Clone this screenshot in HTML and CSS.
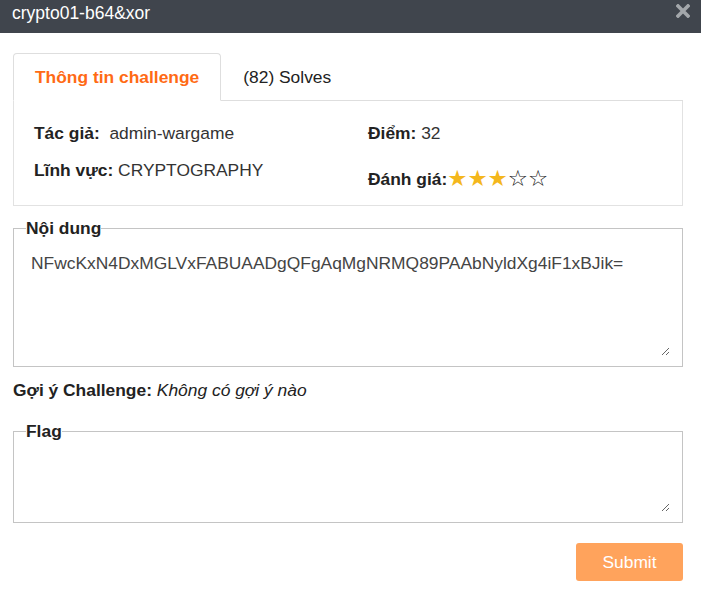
FILE: index.html
```html
<!DOCTYPE html>
<html lang="vi">
<head>
<meta charset="utf-8">
<title>crypto01-b64&amp;xor</title>
<link rel="stylesheet" href="styles.css">
</head>
<body>
<div class="modal">
  <header class="modal-header">
    <h1 class="modal-title">crypto01-b64&amp;xor</h1>
    <button class="close" aria-label="Close">
      <svg width="14" height="14" viewBox="0 0 14 14"><path d="M2 2 L12 12 M12 2 L2 12" stroke="#a3a7ab" stroke-width="3.6" stroke-linecap="square"/></svg>
    </button>
  </header>
  <div class="modal-body">
    <ul class="nav-tabs">
      <li class="tab active">Thông tin challenge</li>
      <li class="tab">(82) Solves</li>
    </ul>
    <div class="tab-panel">
      <div class="info-grid">
        <div class="cell"><b>Tác giả:</b>&nbsp; admin-wargame</div>
        <div class="cell"><b>Điểm:</b> 32</div>
        <div class="cell"><b>Lĩnh vực:</b> CRYPTOGRAPHY</div>
        <div class="cell cell-rating"><b>Đánh giá:</b><span class="stars"><span class="on">★★★</span><span class="off">☆☆</span></span></div>
      </div>
    </div>
    <fieldset class="box box-content">
      <legend>Nội dung</legend>
      <textarea class="area area-content" readonly>NFwcKxN4DxMGLVxFABUAADgQFgAqMgNRMQ89PAAbNyldXg4iF1xBJik=</textarea>
    </fieldset>
    <p class="hint"><b>Gợi ý Challenge:</b> <i>Không có gợi ý nào</i></p>
    <fieldset class="box box-flag">
      <legend>Flag</legend>
      <textarea class="area area-flag"></textarea>
    </fieldset>
    <div class="actions">
      <button class="submit">Submit</button>
    </div>
  </div>
</div>
</body>
</html>
```

FILE: styles.css
```css
* { box-sizing: border-box; }
html, body { margin: 0; padding: 0; background: #fff; }
body {
  font-family: "Liberation Sans", Arial, sans-serif;
  font-size: 17.4px;
  color: #333;
  width: 701px;
  height: 595px;
  overflow: hidden;
}
.modal-header {
  height: 33px;
  background: #40454d;
  display: flex;
  align-items: flex-start;
  justify-content: space-between;
  padding: 0 11px 0 12px;
}
.modal-title {
  margin: 0;
  font-size: 17.5px;
  font-weight: normal;
  line-height: 27px;
  color: #fff;
}
.close {
  border: 0;
  background: none;
  padding: 0;
  margin-top: 4px;
  width: 14px;
  height: 14px;
  display: block;
}
.close svg { display: block; }
.modal-body {
  padding: 20px 18px 0 13px;
}
.nav-tabs {
  list-style: none;
  margin: 0;
  padding: 0;
  display: flex;
  border-bottom: 1px solid #dedede;
}
.tab {
  margin-bottom: -1px;
  padding: 13px 21px;
  line-height: 20px;
  border: 1px solid transparent;
  border-radius: 4px 4px 0 0;
  color: #222;
}
.tab.active {
  color: #ff6a14;
  font-weight: bold;
  background: #fff;
  border-color: #dedede;
  border-bottom-color: #fff;
}
.tab-panel {
  border: 1px solid #e2e2e2;
  border-top: 0;
  padding: 22px 0 16px;
}
.info-grid {
  display: grid;
  grid-template-columns: 1fr 1fr;
  row-gap: 17px;
}
.cell {
  padding: 0 20px;
  line-height: 20px;
  color: #333;
}
.cell b { color: #222; }
.cell-rating { margin-top: 8px; }
.stars {
  font-family: "DejaVu Sans", sans-serif;
  font-size: 22.5px;
  line-height: 20px;
  letter-spacing: 0;
  vertical-align: -1px;
}
.stars .on { color: #f4b71c; }
.stars .off { color: #222; }
.box {
  margin: 12px 0 0;
  padding: 4px 12px 10px;
  border: 1px solid #c4c4c4;
  min-width: 0;
}
.box legend {
  padding: 0;
  font-weight: bold;
  line-height: 20px;
  color: #222;
}
.area {
  display: block;
  width: 100%;
  border: 0;
  outline: none;
  font-family: "Liberation Sans", Arial, sans-serif;
  font-size: 17.4px;
  line-height: 20px;
  color: #444;
  padding: 11px 5px;
  resize: vertical;
  background: #fff;
}
.area-content { height: 114px; }
.area-flag { height: 67px; }
.hint {
  margin: 13px 0 0;
  line-height: 20px;
  color: #222;
}
.hint i { color: #222; }
.box-flag { margin-top: 21px; }
.actions {
  display: flex;
  justify-content: flex-end;
  margin-top: 20px;
}
.submit {
  width: 107px;
  height: 38px;
  border: 0;
  border-radius: 3px;
  background: #ffa35c;
  color: #fff;
  font-family: "Liberation Sans", Arial, sans-serif;
  font-size: 17.4px;
  padding: 0;
}
```
